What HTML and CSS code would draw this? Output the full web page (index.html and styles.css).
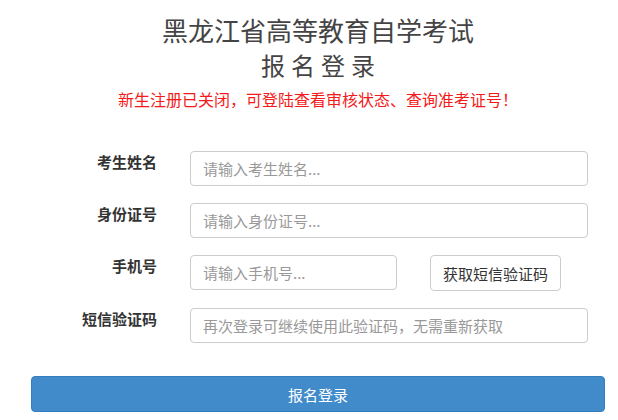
FILE: index.html
```html
<!DOCTYPE html>
<html lang="zh-CN">
<head>
<meta charset="utf-8">
<title>报名登录</title>
<link rel="stylesheet" href="styles.css">
</head>
<body>
<div class="page">
  <div class="header">
    <h1 class="title">黑龙江省高等教育自学考试</h1>
    <h2 class="subtitle">报名登录</h2>
    <p class="notice">新生注册已关闭，可登陆查看审核状态、查询准考证号！</p>
  </div>
  <form class="form">
    <div class="row">
      <label class="label">考生姓名</label>
      <input class="input" type="text" placeholder="请输入考生姓名...">
    </div>
    <div class="row">
      <label class="label">身份证号</label>
      <input class="input" type="text" placeholder="请输入身份证号...">
    </div>
    <div class="row">
      <label class="label">手机号</label>
      <input class="input input-short" type="text" placeholder="请输入手机号...">
      <button class="sms-btn" type="button">获取短信验证码</button>
    </div>
    <div class="row">
      <label class="label">短信验证码</label>
      <input class="input" type="text" placeholder="再次登录可继续使用此验证码，无需重新获取">
    </div>
    <button class="submit" type="button">报名登录</button>
  </form>
</div>
</body>
</html>
```

FILE: styles.css
```css
* { box-sizing: border-box; }
html, body { margin: 0; padding: 0; background: #fff; }
body {
  font-family: "Noto Sans CJK SC", "Noto Sans", sans-serif;
  color: #333;
}
.page {
  width: 574px;
  margin-left: 31px;
  padding-top: 15px;
}
.header { text-align: center; }
.title {
  margin: 0;
  font-size: 26px;
  font-weight: normal;
  line-height: 30px;
  color: #444;
}
.subtitle {
  margin: 5px 0 0;
  font-size: 24px;
  font-weight: normal;
  line-height: 30px;
  letter-spacing: 6px;
  padding-left: 6px;
  color: #444;
}
.notice {
  margin: 9px 0 0;
  font-size: 16px;
  line-height: 20px;
  color: #f51a1a;
}
.form {
  margin-top: 42px;
  display: flex;
  flex-direction: column;
  gap: 17px;
}
.row {
  display: flex;
  align-items: flex-start;
}
.label {
  width: 126px;
  margin-right: 33px;
  text-align: right;
  font-size: 15px;
  font-weight: bold;
  line-height: 20px;
  padding-top: 1px;
  color: #333;
}
.input {
  width: 398px;
  height: 35px;
  border: 1px solid #ccc;
  border-radius: 4px;
  padding: 0 12px;
  font-family: inherit;
  font-size: 15px;
  color: #555;
  outline: none;
}
.input::placeholder { color: #999; }
.input-short { width: 207px; }
.sms-btn {
  margin-left: 33px;
  width: 131px;
  height: 36px;
  border: 1px solid #ccc;
  border-radius: 4px;
  background: #fff;
  font-family: inherit;
  font-size: 15px;
  color: #333;
  padding: 0;
}
.submit {
  margin-top: 16px;
  width: 574px;
  height: 36px;
  border: 1px solid #357ebd;
  border-radius: 4px;
  background: #428bca;
  color: #fff;
  font-family: inherit;
  font-size: 15px;
  padding: 0;
}
```
